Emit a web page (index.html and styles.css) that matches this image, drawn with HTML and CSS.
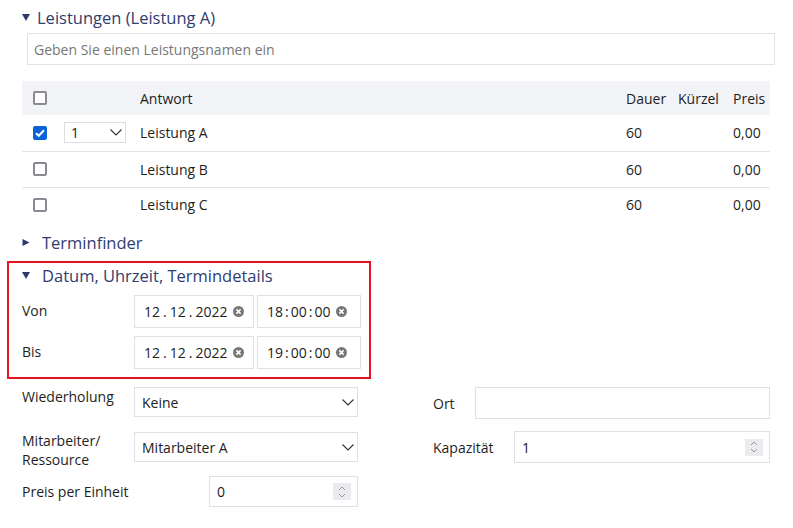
FILE: index.html
```html
<!DOCTYPE html>
<html lang="de">
<head>
  <meta charset="UTF-8" />
  <meta name="viewport" content="width=device-width, initial-scale=1.0">
  <title>Termin bearbeiten</title>
  <link rel="stylesheet" href="styles.css">
</head>
<body>
  <div class="page">
    <div class="section-head first">
      <svg class="caret" width="8" height="7" viewBox="0 0 8 7"><path d="M0 0H8L4 7Z" fill="#2c3a68"/></svg>
      <span>Leistungen (Leistung A)</span>
    </div>
    <input class="search" type="text" placeholder="Geben Sie einen Leistungsnamen ein">

    <table class="services">
      <colgroup>
        <col style="width:36px"><col style="width:76px"><col><col style="width:52px"><col style="width:55px"><col style="width:43px">
      </colgroup>
      <thead>
        <tr>
          <th><span class="check"></span></th>
          <th></th>
          <th>Antwort</th>
          <th>Dauer</th>
          <th>Kürzel</th>
          <th>Preis</th>
        </tr>
      </thead>
      <tbody>
        <tr>
          <td><span class="check checked"><svg width="10" height="8" viewBox="0 0 10 8"><path d="M1 4.2L3.8 6.8L9 1.2" fill="none" stroke="#fff" stroke-width="2"/></svg></span></td>
          <td>
            <div class="qty">
              <span>1</span>
              <svg width="12" height="7" viewBox="0 0 12 7"><path d="M0.5 0.5L6 6L11.5 0.5" fill="none" stroke="#333" stroke-width="1.1"/></svg>
            </div>
          </td>
          <td>Leistung A</td>
          <td>60</td>
          <td></td>
          <td>0,00</td>
        </tr>
        <tr>
          <td><span class="check"></span></td>
          <td></td>
          <td>Leistung B</td>
          <td>60</td>
          <td></td>
          <td>0,00</td>
        </tr>
        <tr>
          <td><span class="check"></span></td>
          <td></td>
          <td>Leistung C</td>
          <td>60</td>
          <td></td>
          <td>0,00</td>
        </tr>
      </tbody>
    </table>

    <div class="section-head finder">
      <svg class="caret" width="8" height="7" viewBox="0 0 8 7"><path d="M0.5 0L7.5 3.5L0.5 7Z" fill="#2c3a68"/></svg>
      <span>Terminfinder</span>
    </div>

    <div class="highlight">
      <div class="section-head">
        <svg class="caret" width="8" height="7" viewBox="0 0 8 7"><path d="M0 0H8L4 7Z" fill="#2c3a68"/></svg>
        <span>Datum, Uhrzeit, Termindetails</span>
      </div>
      <div class="dt-row">
        <span class="dt-label">Von</span>
        <div class="dt-field date">
          <span class="dt-value">12<i>.</i>12<i>.</i>2022</span>
          <svg class="clear" width="11" height="11" viewBox="0 0 11 11"><circle cx="5.5" cy="5.5" r="5.5" fill="#777"/><path d="M3.4 3.4L7.6 7.6M7.6 3.4L3.4 7.6" stroke="#fff" stroke-width="1.5"/></svg>
        </div>
        <div class="dt-field time">
          <span class="dt-value">18<i>:</i>00<i>:</i>00</span>
          <svg class="clear" width="11" height="11" viewBox="0 0 11 11"><circle cx="5.5" cy="5.5" r="5.5" fill="#777"/><path d="M3.4 3.4L7.6 7.6M7.6 3.4L3.4 7.6" stroke="#fff" stroke-width="1.5"/></svg>
        </div>
      </div>
      <div class="dt-row">
        <span class="dt-label">Bis</span>
        <div class="dt-field date">
          <span class="dt-value">12<i>.</i>12<i>.</i>2022</span>
          <svg class="clear" width="11" height="11" viewBox="0 0 11 11"><circle cx="5.5" cy="5.5" r="5.5" fill="#777"/><path d="M3.4 3.4L7.6 7.6M7.6 3.4L3.4 7.6" stroke="#fff" stroke-width="1.5"/></svg>
        </div>
        <div class="dt-field time">
          <span class="dt-value">19<i>:</i>00<i>:</i>00</span>
          <svg class="clear" width="11" height="11" viewBox="0 0 11 11"><circle cx="5.5" cy="5.5" r="5.5" fill="#777"/><path d="M3.4 3.4L7.6 7.6M7.6 3.4L3.4 7.6" stroke="#fff" stroke-width="1.5"/></svg>
        </div>
      </div>
    </div>

    <div class="form-row row-1">
      <div class="half left">
        <label class="lbl top">Wiederholung</label>
        <div class="select">
          <span>Keine</span>
          <svg width="12" height="7" viewBox="0 0 12 7"><path d="M0.5 0.5L6 6L11.5 0.5" fill="none" stroke="#333" stroke-width="1.1"/></svg>
        </div>
      </div>
      <div class="half right">
        <label class="lbl ort">Ort</label>
        <input class="text-input" type="text">
      </div>
    </div>

    <div class="form-row row-2">
      <div class="half left">
        <label class="lbl top two-line">Mitarbeiter/<br>Ressource</label>
        <div class="select">
          <span>Mitarbeiter A</span>
          <svg width="12" height="7" viewBox="0 0 12 7"><path d="M0.5 0.5L6 6L11.5 0.5" fill="none" stroke="#333" stroke-width="1.1"/></svg>
        </div>
      </div>
      <div class="half right">
        <label class="lbl kap">Kapazität</label>
        <div class="number">
          <span>1</span>
          <span class="spin"><svg width="8" height="12" viewBox="0 0 8 12"><path d="M1 4L4 1L7 4M1 8L4 11L7 8" fill="none" stroke="#999" stroke-width="1"/></svg></span>
        </div>
      </div>
    </div>

    <div class="form-row row-3">
      <div class="half left">
        <label class="lbl preis">Preis per Einheit</label>
        <div class="number">
          <span>0</span>
          <span class="spin"><svg width="8" height="12" viewBox="0 0 8 12"><path d="M1 4L4 1L7 4M1 8L4 11L7 8" fill="none" stroke="#999" stroke-width="1"/></svg></span>
        </div>
      </div>
    </div>
  </div>
</body>
</html>
```

FILE: styles.css
```css
* { margin: 0; padding: 0; box-sizing: border-box; }
body {
  font-family: "Open Sans", "DejaVu Sans", sans-serif;
  font-size: 14px;
  color: #1e1e1e;
  background: #fff;
}
.page {
  padding: 5px 0 0 22px;
  width: 793px;
}

/* collapsible headings */
.section-head {
  display: flex;
  align-items: center;
  gap: 12px;
  height: 24px;
  color: #2f3d70;
  font-size: 16.5px;
}
.section-head.first { gap: 7px; }
.section-head.finder { margin-top: 8px; }
.caret { flex: none; }

.search {
  display: block;
  margin: 4px 0 0 5px;
  width: 748px;
  height: 32px;
  border: 1px solid #e3e3e3;
  padding: 0 6px;
  font-family: inherit;
  font-size: 14px;
  color: #222;
  outline: none;
}
.search::placeholder { color: #777; }

/* services table */
.services {
  margin-top: 16px;
  width: 748px;
  border-collapse: collapse;
  table-layout: fixed;
}
.services th {
  background: #f2f3f7;
  height: 34px;
  font-weight: normal;
  text-align: left;
  padding: 0 0 0 6px;
}
.services td {
  height: 36px;
  padding: 0 0 0 6px;
  border-bottom: 1px solid #e4e4e4;
}
.services tbody tr:last-child td { border-bottom: none; height: 35px; }
.services th:first-child,
.services td:first-child { padding-left: 11px; }
.services td:nth-child(2) { padding-left: 6px; }

.check {
  display: flex;
  align-items: center;
  justify-content: center;
  width: 14px;
  height: 14px;
  border: 2px solid #8a8a94;
  border-radius: 2px;
  background: #fff;
}
.check.checked {
  background: #0b62d6;
  border-color: #0b62d6;
}

.qty {
  display: flex;
  align-items: center;
  justify-content: space-between;
  width: 62px;
  height: 21px;
  border: 1px solid #dedede;
  padding: 0 3px 0 6px;
  color: #222;
}

/* highlighted date block */
.highlight {
  margin: 7px 0 0 -15px;
  width: 364px;
  border: 2px solid #e5141e;
  padding: 0 0 8px 13px;
}
.dt-row {
  display: flex;
  align-items: center;
  margin-top: 8px;
  height: 33px;
}
.dt-label {
  width: 112px;
  margin-top: -2px;
}
.dt-field {
  display: flex;
  align-items: center;
  height: 33px;
  border: 1px solid #e0e0e0;
  padding-left: 9px;
  color: #222;
}
.dt-field.date { width: 120px; }
.dt-field.time { width: 104px; margin-left: 3px; }
.dt-value i {
  font-style: normal;
  margin: 0 3px;
}
.dt-field.time .dt-value i { margin: 0 2px; }
.clear { margin-left: 6px; }

/* lower form */
.form-row { display: flex; }
.row-1 { margin-top: 8px; }
.row-2 { margin-top: 12px; }
.row-3 { margin-top: 7px; }
.half { display: flex; }
.half.left { width: 336px; }
.half.right { width: 337px; margin-left: 75px; align-items: center; }
.row-2 .half.right { align-self: flex-start; }
.row-3 .half.left { align-items: center; }

.lbl { flex: none; color: #1e1e1e; }
.lbl.top { width: 112px; line-height: 20px; }
.lbl.two-line { line-height: 19px; }
.lbl.preis { width: 187px; }
.lbl.ort { width: 42px; }
.lbl.kap { width: 81px; }

.select {
  display: flex;
  align-items: center;
  justify-content: space-between;
  width: 224px;
  height: 30px;
  border: 1px solid #e0e0e0;
  padding: 0 3px 0 7px;
  color: #222;
}
.row-2 .select { margin-top: 1px; }

.text-input {
  flex: 1;
  height: 32px;
  border: 1px solid #e0e0e0;
  outline: none;
}

.number {
  flex: 1;
  display: flex;
  align-items: center;
  justify-content: space-between;
  height: 32px;
  border: 1px solid #e0e0e0;
  padding: 0 6px 0 7px;
  color: #222;
}
.row-3 .number { height: 31px; }
.spin {
  display: flex;
  align-items: center;
  justify-content: center;
  width: 18px;
  height: 17px;
  background: #ebebef;
}
```
